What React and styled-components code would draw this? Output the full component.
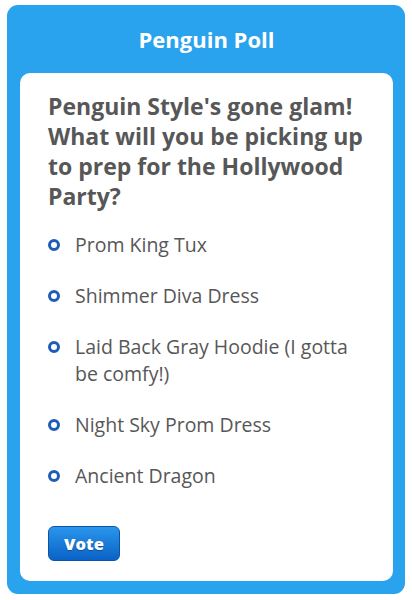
import React from "react";
import styled, { createGlobalStyle } from "styled-components";

const GlobalStyle = createGlobalStyle`
  body {
    margin: 0;
    background: #ffffff;
    font-family: "Open Sans", "Liberation Sans", sans-serif;
  }
`;

const Frame = styled.section`
  box-sizing: border-box;
  width: 398px;
  height: 589px;
  margin: 5px 0 0 7px;
  background: #29a3ee;
  border-radius: 11px;
  display: flex;
  flex-direction: column;
  padding: 0 12px 13px 13px;
`;

const Title = styled.h1`
  margin: 0;
  height: 68px;
  display: flex;
  align-items: center;
  justify-content: center;
  color: #ffffff;
  font-family: "Open Sans", sans-serif;
  font-weight: 700;
  font-size: 22px;
`;

const Panel = styled.div`
  flex: 1;
  background: #ffffff;
  border-radius: 10px;
  padding: 18px 20px 20px 28px;
  display: flex;
  flex-direction: column;
`;

const Question = styled.h2`
  margin: 0;
  color: #575757;
  font-family: "Open Sans", sans-serif;
  font-weight: 700;
  font-size: 23px;
  line-height: 30px;
`;

const Options = styled.ul`
  list-style: none;
  margin: 20px 0 0;
  padding: 0;
  display: flex;
  flex-direction: column;
  gap: 24px;
`;

const Option = styled.li`
  display: flex;
  align-items: flex-start;
  gap: 15px;
  color: #575757;
  font-size: 19.5px;
  line-height: 27px;
`;

const Radio = styled.span`
  flex: none;
  box-sizing: border-box;
  width: 12px;
  height: 12px;
  margin-top: 8px;
  border: 3px solid #1f5cb6;
  border-radius: 50%;
`;

const VoteButton = styled.button`
  align-self: flex-start;
  margin-top: auto;
  width: 72px;
  height: 35px;
  border: 1px solid #0b55a8;
  border-radius: 6px;
  background: linear-gradient(#2a96ec, #0a62c6);
  color: #ffffff;
  font-family: "Open Sans", sans-serif;
  font-weight: 800;
  font-size: 16.5px;
  text-shadow: 0 1px 1px rgba(0, 0, 0, 0.3);
`;

const choices = [
  "Prom King Tux",
  "Shimmer Diva Dress",
  "Laid Back Gray Hoodie (I gotta be comfy!)",
  "Night Sky Prom Dress",
  "Ancient Dragon",
];

const App = () => {
  return (
    <>
      <GlobalStyle />
      <Frame>
        <Title>Penguin Poll</Title>
        <Panel>
          <Question>
            Penguin Style's gone glam! What will you be picking up to prep for
            the Hollywood Party?
          </Question>
          <Options>
            {choices.map((c) => (
              <Option key={c}>
                <Radio />
                <span>{c}</span>
              </Option>
            ))}
          </Options>
          <VoteButton>Vote</VoteButton>
        </Panel>
      </Frame>
    </>
  );
};

export default App;
